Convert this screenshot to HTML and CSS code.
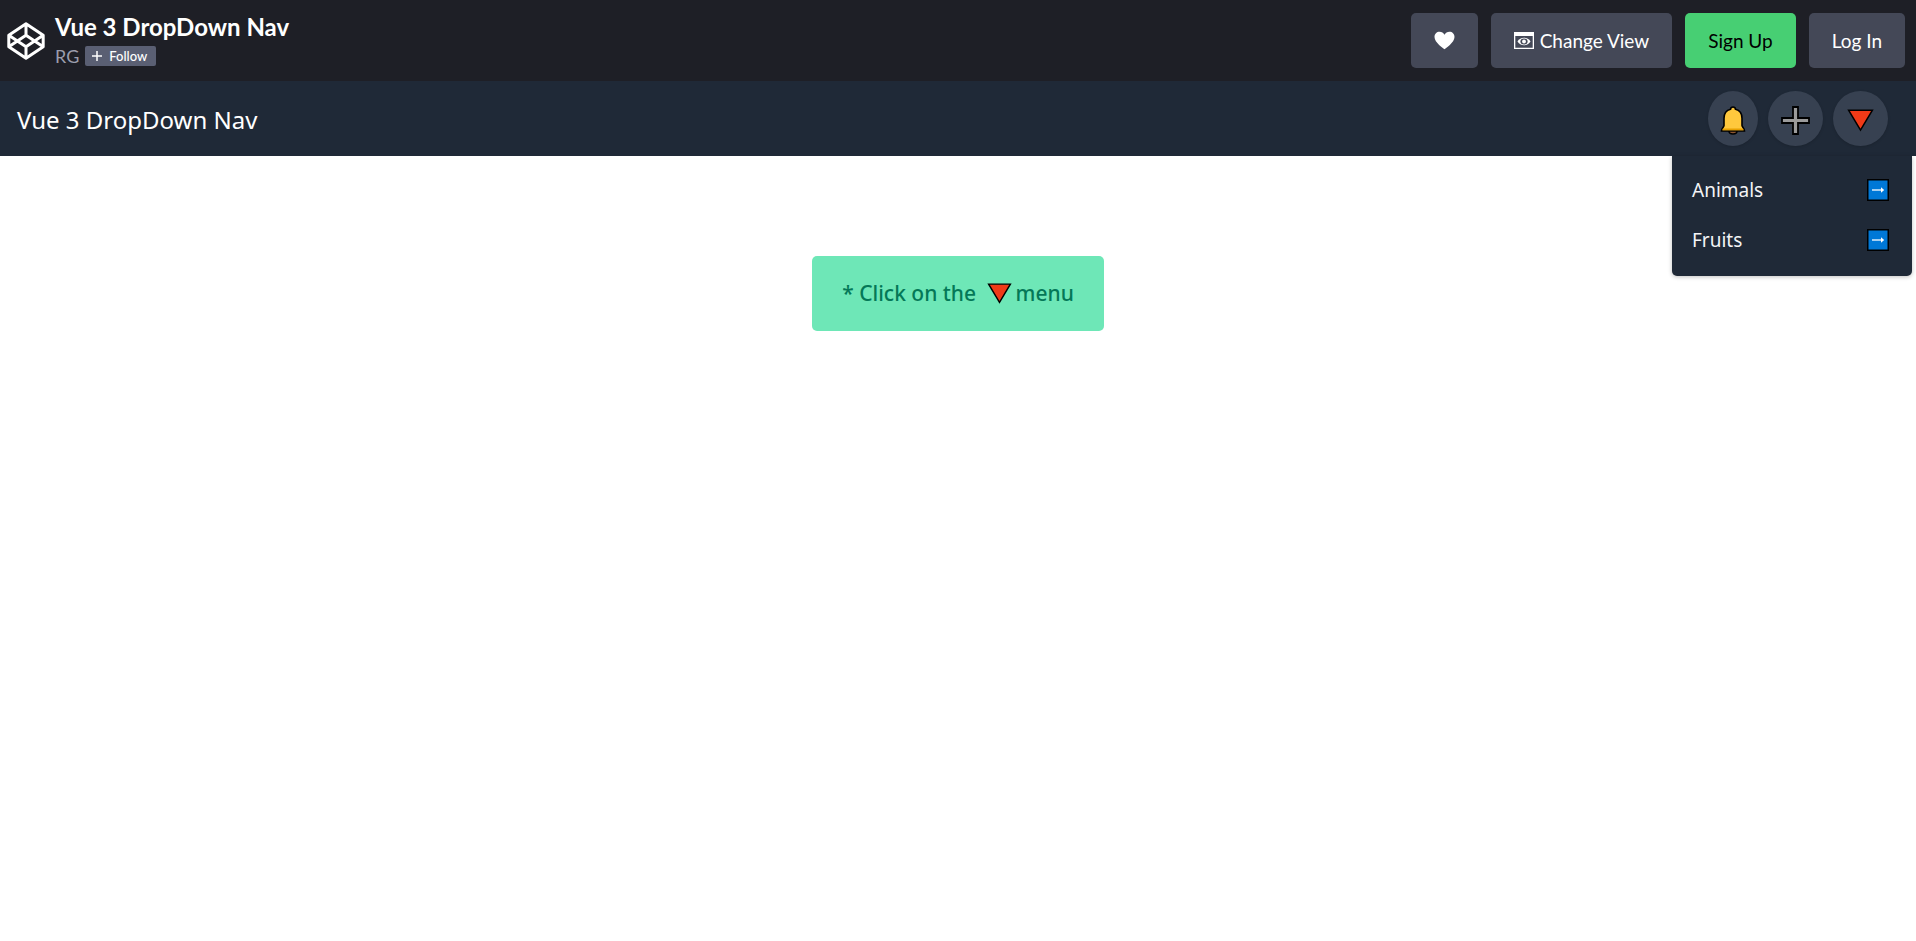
FILE: index.html
```html
<!DOCTYPE html>
<html lang="en">
<head>
<meta charset="utf-8">
<title>Vue 3 DropDown Nav</title>
<link rel="stylesheet" href="styles.css">
</head>
<body>
<svg class="defs" aria-hidden="true">
  <symbol id="triangle" viewBox="0 0 26 22"><path d="M1.6 1.2h22.8L13 20.2z" fill="#f03a17" stroke="#000" stroke-width="1.5"/></symbol>
  <symbol id="arrow" viewBox="0 0 22 22"><path d="M.75 .75h20.5v20.5H.75z" fill="#0078d7" stroke="#000" stroke-width="1.5"/><path d="M5 11h11" stroke="#fff" stroke-width="1.3"/><path d="M14 8.200l3.200 2.800-3.200 2.800z" fill="#fff"/></symbol>
</svg>
<header class="pen-bar">
  <svg class="logo" viewBox="0 0 38 38" fill="none" stroke="#fff" stroke-width="3" stroke-linejoin="round" aria-hidden="true">
    <path d="M19 1.8l17.2 11.4v11.6L19 36.2 1.8 24.8V13.2zM1.8 13.2L19 24.8l17.2-11.6M1.8 24.8L19 13.2l17.2 11.6M19 1.8v11.4M19 24.8v11.4"/>
  </svg>
  <div class="pen-info">
    <h1 class="pen-title">Vue 3 DropDown Nav</h1>
    <div class="author">
      <a class="author-name" href="#">RG</a>
      <button class="follow" type="button"><svg width="10" height="10" viewBox="0 0 10 10" aria-hidden="true"><path d="M5 0v10M0 5h10" stroke="#fff" stroke-width="1.5"/></svg>Follow</button>
    </div>
  </div>
  <div class="actions">
    <button class="btn" type="button" aria-label="Love"><svg width="21" height="19" viewBox="0 0 21 19" aria-hidden="true"><path d="M10.5 18.2C9.500 17.500 .5 11.500 .5 6 .5 2.800 2.800 .8 5.500 .8c2.200 0 4 1.100 5 3 1-1.900 2.800-3 5-3 2.700 0 5 2 5 5.200 0 5.500-9 11.500-10 12.200z" fill="#fff"/></svg></button>
    <button class="btn" type="button"><svg width="20" height="17" viewBox="0 0 20 17" aria-hidden="true"><path d="M0 0h20v17H0zM1.300 4v11.700h17.400V4z" fill="#fff" fill-rule="evenodd"/><path d="M3.500 9.600C6 4.600 14 4.600 16.500 9.600 14 14.400 6 14.400 3.500 9.600z" fill="#fff"/><ellipse cx="10" cy="9.500" rx="3.600" ry="3" fill="#444857"/><circle cx="10" cy="9.500" r="1.900" fill="#fff"/></svg>Change View</button>
    <button class="btn btn-signup" type="button">Sign Up</button>
    <button class="btn" type="button">Log In</button>
  </div>
</header>
<nav class="nav">
  <h2 class="nav-title">Vue 3 DropDown Nav</h2>
  <div class="nav-buttons">
    <button class="round round-bell" type="button" aria-label="Notifications"><svg width="26" height="29" viewBox="0 0 26 29" aria-hidden="true"><path d="M9 23.500h8v1.500c0 4-8 4-8 0z" fill="#8e562e" stroke="#000" stroke-width="1.500"/><path d="M10.500 3.300c.2-3 4.800-3 5 0 4.500 1.200 6.500 5 6.500 9v7.200c0 1.500 2.500 3 2.500 5.500h-23c0-2.500 2.500-4 2.500-5.500v-7.200c0-4 2-7.800 6.500-9z" fill="#ffc83d" stroke="#000" stroke-width="1.600"/><path d="M3 22.500h20l.7 1.800H2.300z" fill="#e8a000"/></svg></button>
    <button class="round" type="button" aria-label="Add"><svg width="29" height="29" viewBox="0 0 29 29" aria-hidden="true"><path d="M12 1h5v11h11v5H17v11h-5V17H1v-5h11z" fill="#9b9b9b" stroke="#000" stroke-width="1.800"/></svg></button>
    <button class="round" type="button" aria-label="Menu" aria-expanded="true"><svg width="27" height="23" aria-hidden="true"><use href="#triangle"/></svg></button>
  </div>
  <div class="menu">
    <a class="menu-item" href="#">Animals<svg width="22" height="22" aria-hidden="true"><use href="#arrow"/></svg></a>
    <a class="menu-item" href="#">Fruits<svg width="22" height="22" aria-hidden="true"><use href="#arrow"/></svg></a>
  </div>
</nav>
<main class="content">
  <p class="hint">* Click on the <svg width="25" height="21" aria-hidden="true"><use href="#triangle"/></svg>menu</p>
</main>
</body>
</html>
```
FILE: styles.css
```css
* { box-sizing: border-box; }
body { margin: 0; background: #fff; font-family: "Noto Sans", sans-serif; }
button { border: 0; font: inherit; cursor: pointer; }
a { text-decoration: none; }
h1, h2, p { margin: 0; }
svg { flex: none; }
.defs { position: absolute; width: 0; height: 0; }

.pen-bar {
  display: flex;
  align-items: center;
  padding: 13px 11px 13px 7px;
  background: #1e1f26;
  font-family: Lato, sans-serif;
}
.logo { width: 38px; height: 38px; }
.pen-info { margin-left: 10px; }
.pen-title { color: #fff; font-size: 24px; line-height: 28px; font-weight: 700; }
.author { display: flex; align-items: center; gap: 6px; padding-top: 3px; }
.author-name { color: #9b9dad; font-size: 18px; line-height: 24px; }
.follow {
  display: flex;
  align-items: center;
  gap: 7px;
  height: 20px;
  padding: 0 9px 0 7px;
  border-radius: 2px;
  background: #5a5f73;
  color: #fff;
  font-size: 13px;
  font-weight: 500;
}
.actions { display: flex; gap: 13px; margin-left: auto; }
.btn {
  display: flex;
  align-items: center;
  gap: 6px;
  height: 55px;
  padding: 0 23px;
  border-radius: 5px;
  background: #444857;
  color: #fff;
  font-size: 19px;
}
.btn-signup { background: #47cf73; color: #000; }

.nav {
  position: relative;
  display: flex;
  align-items: center;
  justify-content: space-between;
  padding: 10px 28px 10px 17px;
  background: #1f2937;
}
.nav-title { padding-top: 2px; color: #fff; font-size: 24px; line-height: 32px; font-weight: 400; }
.nav-buttons { display: flex; gap: 10px; }
.round {
  display: grid;
  place-items: center;
  width: 55px;
  height: 55px;
  padding: 3px 0 0;
  border-radius: 50%;
  background: #374151;
  box-shadow: 0 1px 3px rgba(0, 0, 0, .15);
}
.round-bell { width: 50px; }
.menu {
  position: absolute;
  top: 100%;
  right: 4px;
  width: 240px;
  padding: 9px 0 11px;
  border-radius: 0 0 5px 5px;
  background: #1f2937;
  box-shadow: 0 1px 4px rgba(0, 0, 0, .25);
}
.menu-item {
  display: flex;
  align-items: center;
  justify-content: space-between;
  height: 50px;
  padding: 0 23px 0 20px;
  color: #f3f4f6;
  font-size: 19px;
}
.content { display: flex; justify-content: center; padding-top: 100px; }
.hint {
  display: flex;
  align-items: center;
  white-space: pre;
  padding: 20px 30px;
  border-radius: 5px;
  background: #6ee7b7;
  color: #047857;
  font-size: 21px;
  line-height: 35px;
  font-weight: 500;
}
.hint svg { margin: 0 4px 0 5px; }
```
